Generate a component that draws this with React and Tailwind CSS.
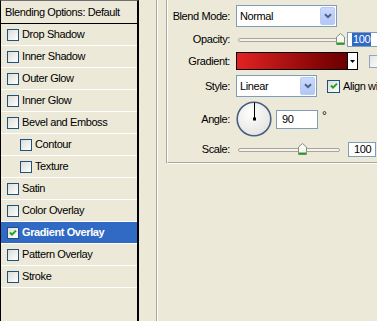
import React from "react";

const layers = [
  { name: "Drop Shadow" },
  { name: "Inner Shadow" },
  { name: "Outer Glow" },
  { name: "Inner Glow" },
  { name: "Bevel and Emboss" },
  { name: "Contour", sub: true },
  { name: "Texture", sub: true },
  { name: "Satin" },
  { name: "Color Overlay" },
  { name: "Gradient Overlay", active: true, checked: true },
  { name: "Pattern Overlay" },
  { name: "Stroke" },
];

const Checkbox = ({ checked, size = "h-[12px] w-[12px]" }) => (
  <span
    className={`flex ${size} shrink-0 items-center justify-center border border-[#1c5180] bg-gradient-to-br from-[#dcdcd7] to-white`}
  >
    {checked && (
      <svg width="8" height="8" viewBox="0 0 8 8">
        <path d="M1 3.5 L3 5.6 L7 1.6" fill="none" stroke="#21a121" strokeWidth="2" />
      </svg>
    )}
  </span>
);

const ComboButton = () => (
  <div className="flex h-full w-[15px] items-center justify-center rounded-[2px] border border-[#b7cbf7] bg-gradient-to-b from-[#cad9fd] to-[#b3c6f5]">
    <svg width="8" height="6" viewBox="0 0 8 6">
      <path d="M1 1.2 L4 4.2 L7 1.2" fill="none" stroke="#4d6185" strokeWidth="2" />
    </svg>
  </div>
);

const Select = ({ value, width }) => (
  <div className={`flex h-[22px] ${width} items-center border border-[#7f9db9] bg-white p-[1px]`}>
    <span className="flex-1 pl-[2px]">{value}</span>
    <ComboButton />
  </div>
);

const Thumb = () => (
  <svg width="9" height="12" viewBox="0 0 9 12">
    <path d="M0.5 4 L4.5 0.5 L8.5 4 V11.5 H0.5 Z" fill="#f7f7f4" stroke="#8c8c80" />
    <path d="M1 10.5 H8" stroke="#21a121" strokeWidth="2" />
  </svg>
);

const Slider = ({ width, thumbLeft }) => (
  <div className={`relative h-[15px] ${width}`}>
    <div className="absolute left-[2px] right-[4px] top-[6px] h-[4px] rounded-full border border-[#a8a699] bg-[#f4f3ee]" />
    <div className="absolute top-[1px]" style={{ left: thumbLeft }}>
      <Thumb />
    </div>
  </div>
);

const Row = ({ label, children, className = "" }) => (
  <div className={`flex items-center ${className}`}>
    <div className="w-[62px] shrink-0 text-right">{label}</div>
    <div className="ml-[6px] flex items-center whitespace-nowrap">{children}</div>
  </div>
);

export default function App() {
  return (
    <div className="flex h-[321px] w-[377px] overflow-hidden bg-[#ece9d8] font-['Liberation_Sans',Arial,sans-serif] text-[11px] leading-none tracking-[-0.4px] text-black">
      {/* styles list */}
      <div className="w-[139px] shrink-0 border-l border-r-2 border-t border-l-black border-r-black border-t-[#6f6f6f]">
        <div className="flex h-[23px] items-center border-b border-black px-[4px]">
          Blending Options: Default
        </div>
        {layers.map((l) => (
          <div
            key={l.name}
            className={`flex h-[22px] items-center gap-[3px] border-b border-white ${
              l.sub ? "pl-[19px]" : "pl-[6px]"
            } ${l.active ? "bg-[#316ac5] font-bold text-white" : ""}`}
          >
            <Checkbox checked={l.checked} />
            <span>{l.name}</span>
          </div>
        ))}
      </div>

      <div className="w-[17px] shrink-0" />
      <div className="w-[2px] shrink-0 border-l border-r border-l-[#aca899] border-r-white" />
      <div className="w-[8px] shrink-0" />

      {/* group box */}
      <div className="flex h-[164px] min-w-[260px] border-b border-l border-b-white border-l-[#aca899]">
        <div className="flex flex-1 flex-col border-b border-l border-b-[#aca899] border-l-white pt-[5px]">
          <Row label="Blend Mode:">
            <Select value="Normal" width="w-[101px]" />
          </Row>

          <Row label="Opacity:" className="mt-[5px]">
            <Slider width="w-[107px]" thumbLeft={100} />
            <div className="ml-[4px] flex h-[15px] w-[40px] items-center border border-[#7f9db9] bg-white pl-[4px]">
              <span className="bg-[#316ac5] px-[1px] py-[1px] text-white">100</span>
            </div>
          </Row>

          <Row label="Gradient:" className="mt-[5px]">
            <div className="flex h-[18px] w-[122px] border border-black">
              <div className="flex-1 bg-gradient-to-r from-[#e32222] to-[#6c0000]" />
              <div className="flex w-[10px] items-center justify-center border-l border-black bg-white">
                <svg width="5" height="3" viewBox="0 0 5 3">
                  <path d="M0 0 H5 L2.5 3 Z" fill="#000" />
                </svg>
              </div>
            </div>
            <span className="ml-[11px] h-[13px] w-[13px] border border-[#8fa7c0] bg-gradient-to-br from-[#e4e4df] to-white" />
          </Row>

          <Row label="Style:" className="mt-[5px]">
            <Select value="Linear" width="w-[81px]" />
            <span className="ml-[10px]">
              <Checkbox checked size="h-[13px] w-[13px]" />
            </span>
            <span className="ml-[3px]">Align with Layer</span>
          </Row>

          <Row label="Angle:" className="mt-[4px]">
            <svg width="36" height="36" viewBox="0 0 36 36">
              <defs>
                <radialGradient id="dial" cx="40%" cy="35%" r="70%">
                  <stop offset="0" stopColor="#ffffff" />
                  <stop offset="1" stopColor="#e2e2de" />
                </radialGradient>
              </defs>
              <circle cx="18" cy="18" r="16.8" fill="url(#dial)" stroke="#4a5f86" strokeWidth="1.6" />
              <path d="M18.5 1.5 V18" stroke="#000" strokeWidth="1" />
              <rect x="17" y="16.5" width="3" height="3" fill="#000" />
            </svg>
            <div className="ml-[4px] flex h-[19px] w-[42px] items-center border border-[#7f9db9] bg-white pl-[5px]">
              90
            </div>
            <span className="ml-[4px] -mt-[6px] text-[12px]">°</span>
          </Row>

          <Row label="Scale:" className="mt-[5px]">
            <Slider width="w-[108px]" thumbLeft={62} />
            <div className="ml-[4px] flex h-[15px] w-[28px] items-center border border-[#7f9db9] bg-white pl-[5px]">
              100
            </div>
          </Row>
        </div>
      </div>
    </div>
  );
}
